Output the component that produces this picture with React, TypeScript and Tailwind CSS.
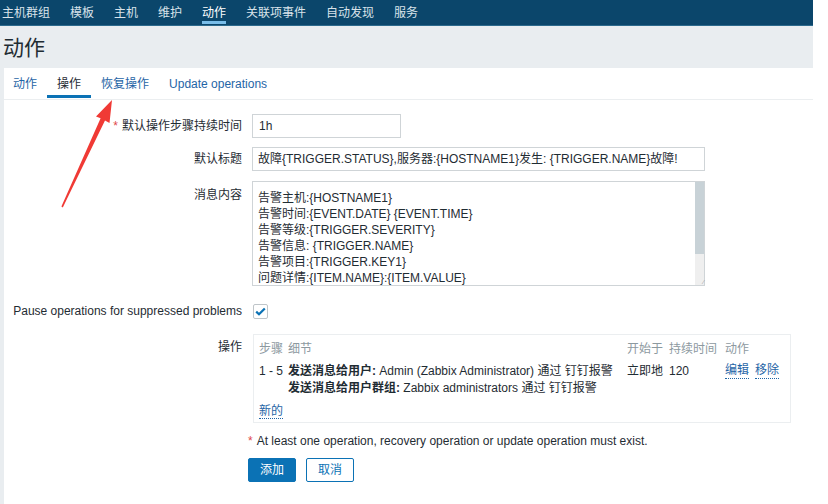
import React from "react";

const font = { fontFamily: "'Liberation Sans', 'Noto Sans CJK SC', sans-serif" };

function NavItem({ label, active }: { label: string; active?: boolean }) {
  return (
    <div className="relative h-full flex items-center">
      <span className={active ? "text-white" : "text-[#d9e3ea]"}>{label}</span>
      {active && <span className="absolute left-0 right-0 bottom-[1px] h-[3px] bg-[#78bde9]" />}
    </div>
  );
}

function Label({ children, req, className = "" }: { children: React.ReactNode; req?: boolean; className?: string }) {
  return (
    <div className={"w-[238px] shrink-0 text-right pr-0 text-[#1f2c33] " + className}>
      {req && <span className="text-[#e0484b] mr-[4px]">*</span>}
      {children}
    </div>
  );
}

export default function App() {
  const msg = [
    "告警主机:{HOSTNAME1}",
    "告警时间:{EVENT.DATE} {EVENT.TIME}",
    "告警等级:{TRIGGER.SEVERITY}",
    "告警信息: {TRIGGER.NAME}",
    "告警项目:{TRIGGER.KEY1}",
    "问题详情:{ITEM.NAME}:{ITEM.VALUE}",
  ];
  return (
    <div className="relative w-[828px] h-[504px] bg-white overflow-hidden text-[12px]" style={font}>
      <div className="w-[813px]">
        {/* top nav */}
        <div className="h-[26px] bg-[#0b466b] flex items-stretch gap-[20px] pl-[2px] text-[12px] border-b border-[#2c6a8d]">
          <NavItem label="主机群组" />
          <NavItem label="模板" />
          <NavItem label="主机" />
          <NavItem label="维护" />
          <NavItem label="动作" active />
          <NavItem label="关联项事件" />
          <NavItem label="自动发现" />
          <NavItem label="服务" />
        </div>
        {/* title */}
        <div className="h-[42px] bg-[#e9edf0] flex items-center pl-[3px]">
          <h1 className="text-[21px] text-[#1f2c33] leading-none">动作</h1>
        </div>
        <div className="flex">
          <div className="w-[4px] h-[436px] bg-[#e9edf0] shrink-0" />
          <div className="flex-1">
            {/* tabs */}
            <div className="h-[32px] flex items-stretch border-b border-[#ebeef0] pl-[5px]">
              <div className="relative flex items-center px-[4px] text-[#1f65a6]">动作</div>
              <div className="relative flex items-center px-[10px] ml-[6px] text-[#1f2c33]">
                操作
                <span className="absolute left-0 right-0 bottom-[1px] h-[3px] bg-[#0b72b5]" />
              </div>
              <div className="flex items-center ml-[10px] text-[#1f65a6]">恢复操作</div>
              <div className="flex items-center ml-[20px] text-[#1f65a6]">Update operations</div>
            </div>

            {/* form */}
            <div className="pt-[14px]">
              <div className="flex items-center h-[24px]">
                <Label req>默认操作步骤持续时间</Label>
                <div className="ml-[10px] w-[149px] h-[24px] border border-[#cfd4d7] px-[6px] flex items-center text-[#1f2c33]">1h</div>
              </div>
              <div className="flex items-center h-[24px] mt-[9px]">
                <Label>默认标题</Label>
                <div className="ml-[10px] w-[453px] h-[24px] border border-[#cfd4d7] px-[5px] flex items-center text-[#1f2c33] whitespace-nowrap overflow-hidden">
                  故障{"{TRIGGER.STATUS}"},服务器:{"{HOSTNAME1}"}发生: {"{TRIGGER.NAME}"}故障!
                </div>
              </div>
              <div className="flex mt-[10px]">
                <Label className="pt-[5px]">消息内容</Label>
                <div className="ml-[10px] w-[453px] h-[105px] border border-[#cfd4d7] flex text-[#1f2c33]">
                  <div className="flex-1 pl-[5px] pt-[8px] leading-[16px] whitespace-nowrap overflow-hidden">
                    {msg.map((m) => (
                      <div key={m}>{m}</div>
                    ))}
                  </div>
                  <div className="w-[9px] flex flex-col bg-[#efefef]">
                    <div className="h-[72px] bg-[#c8d2d7]" />
                    <div className="flex-1" />
                    <div className="h-[9px] flex items-end justify-end text-[6px] leading-none text-[#999]">⁄</div>
                  </div>
                </div>
              </div>

              <div className="flex items-center mt-[17px] h-[16px]">
                <Label>Pause operations for suppressed problems</Label>
                <div className="ml-[11px] w-[15px] h-[15px] border border-[#bfc5c9] rounded-[2px] bg-white flex items-center justify-center">
                  <svg width="11" height="9" viewBox="0 0 11 9">
                    <path d="M1.2 4.6 L4 7.3 L9.8 1.4" fill="none" stroke="#0b72b5" strokeWidth="2.2" />
                  </svg>
                </div>
              </div>

              <div className="flex mt-[15px]">
                <Label className="pt-[4px]">操作</Label>
                <div className="ml-[11px] w-[538px] h-[89px] border border-[#ebeef0] px-[5px] pt-[6px] text-[#1f2c33]">
                  <div className="flex text-[#8d999f] h-[16px] items-center">
                    <div className="w-[29px]">步骤</div>
                    <div className="w-[339px]">细节</div>
                    <div className="w-[42px]">开始于</div>
                    <div className="w-[56px]">持续时间</div>
                    <div>动作</div>
                  </div>
                  <div className="flex mt-[6px] leading-[17px]">
                    <div className="w-[29px] whitespace-nowrap">1 - 5</div>
                    <div className="w-[339px] whitespace-nowrap">
                      <div><b>发送消息给用户:</b> Admin (Zabbix Administrator) 通过 钉钉报警</div>
                      <div><b>发送消息给用户群组:</b> Zabbix administrators 通过 钉钉报警</div>
                    </div>
                    <div className="w-[42px]">立即地</div>
                    <div className="w-[56px]">120</div>
                    <div className="flex gap-[6px] text-[#1f65a6]">
                      <span className="border-b border-dotted border-[#1f65a6] leading-[15px] h-[16px]">编辑</span>
                      <span className="border-b border-dotted border-[#1f65a6] leading-[15px] h-[16px]">移除</span>
                    </div>
                  </div>
                  <div className="mt-[5px]">
                    <span className="text-[#1f65a6] border-b border-dotted border-[#1f65a6]">新的</span>
                  </div>
                </div>
              </div>

              <div className="pl-[244px] mt-[10px] h-[16px] flex items-center text-[#1f2c33]">
                <span className="text-[#e0484b] mr-[4px]">*</span>At least one operation, recovery operation or update operation must exist.
              </div>
              <div className="pl-[244px] mt-[9px] flex gap-[10px]">
                <button className="w-[48px] h-[24px] bg-[#0b72b5] text-white rounded-[2px] border border-[#0b72b5]">添加</button>
                <button className="w-[48px] h-[24px] bg-white text-[#0b72b5] rounded-[2px] border border-[#0b72b5]">取消</button>
              </div>
            </div>
          </div>
        </div>
      </div>

      <svg className="absolute left-0 top-0 pointer-events-none" width="828" height="504">
        <polygon
          points="112,100 109.5,123 105,120.5 62.8,207.4 61.4,206.6 100.6,118.2 96,116.5"
          fill="#f03a35"
        />
      </svg>
    </div>
  );
}
